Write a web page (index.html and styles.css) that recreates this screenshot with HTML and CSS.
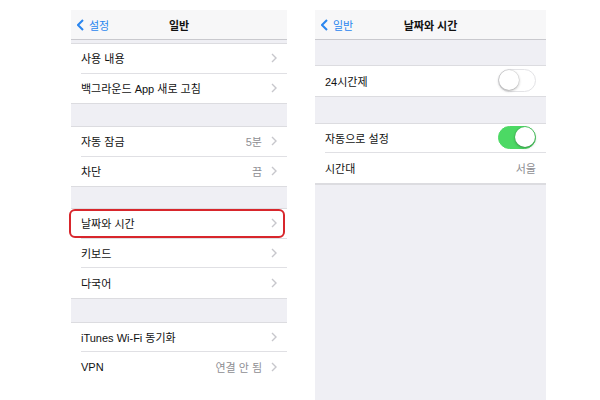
FILE: index.html
```html
<!DOCTYPE html>
<html lang="ko">
<head>
<meta charset="utf-8">
<link rel="stylesheet" href="styles.css">
</head>
<body>
<div class="page">
  <section class="phone phone-left">
    <header class="nav">
      <a class="back"><svg class="back-icon" viewBox="0 0 7 12"><path d="M6 1 1 6l5 5"/></svg>설정</a>
      <h1 class="title">일반</h1>
    </header>
    <div class="gap gap-top"></div>
    <ul class="group">
      <li class="row"><span class="label">사용 내용</span><span class="chev"><svg viewBox="0 0 6 10"><path d="M1 1l4 4-4 4"/></svg></span></li>
      <li class="row"><span class="label">백그라운드 App 새로 고침</span><span class="chev"><svg viewBox="0 0 6 10"><path d="M1 1l4 4-4 4"/></svg></span></li>
    </ul>
    <div class="gap gap-a"></div>
    <ul class="group">
      <li class="row"><span class="label">자동 잠금</span><span class="value">5분</span><span class="chev"><svg viewBox="0 0 6 10"><path d="M1 1l4 4-4 4"/></svg></span></li>
      <li class="row"><span class="label">차단</span><span class="value">끔</span><span class="chev"><svg viewBox="0 0 6 10"><path d="M1 1l4 4-4 4"/></svg></span></li>
    </ul>
    <div class="gap gap-b"></div>
    <ul class="group">
      <li class="row highlighted"><span class="label">날짜와 시간</span><span class="chev"><svg viewBox="0 0 6 10"><path d="M1 1l4 4-4 4"/></svg></span></li>
      <li class="row"><span class="label">키보드</span><span class="chev"><svg viewBox="0 0 6 10"><path d="M1 1l4 4-4 4"/></svg></span></li>
      <li class="row"><span class="label">다국어</span><span class="chev"><svg viewBox="0 0 6 10"><path d="M1 1l4 4-4 4"/></svg></span></li>
    </ul>
    <div class="gap gap-c"></div>
    <ul class="group group-last">
      <li class="row"><span class="label">iTunes Wi-Fi 동기화</span><span class="chev"><svg viewBox="0 0 6 10"><path d="M1 1l4 4-4 4"/></svg></span></li>
      <li class="row"><span class="label">VPN</span><span class="value">연결 안 됨</span><span class="chev"><svg viewBox="0 0 6 10"><path d="M1 1l4 4-4 4"/></svg></span></li>
    </ul>
  </section>

  <section class="phone phone-right">
    <header class="nav">
      <a class="back"><svg class="back-icon" viewBox="0 0 7 12"><path d="M6 1 1 6l5 5"/></svg>일반</a>
      <h1 class="title">날짜와 시간</h1>
    </header>
    <div class="gap gap-d"></div>
    <ul class="group">
      <li class="row"><span class="label">24시간제</span><span class="switch"></span></li>
    </ul>
    <div class="gap gap-e"></div>
    <ul class="group">
      <li class="row"><span class="label">자동으로 설정</span><span class="switch on"></span></li>
      <li class="row"><span class="label">시간대</span><span class="value value-plain">서울</span></li>
    </ul>
    <div class="fill"></div>
  </section>
</div>
</body>
</html>
```

FILE: styles.css
```css
* { box-sizing: border-box; }
html, body { margin: 0; padding: 0; background: #fff; }
body {
  width: 600px;
  height: 400px;
  overflow: hidden;
  font-family: "Liberation Sans", "Noto Sans CJK KR", sans-serif;
  font-size: 11px;
  color: #111;
}
.page {
  display: flex;
  gap: 28px;
  padding: 10px 0 0 71px;
  height: 400px;
}
.phone {
  display: flex;
  flex-direction: column;
  height: 390px;
}
.phone-left { width: 216px; }
.phone-right { width: 231px; background: #efeff4; }

.nav {
  height: 30px;
  flex: none;
  display: grid;
  grid-template-columns: 1fr auto 1fr;
  align-items: center;
  background: #f7f7f8;
  border-bottom: 1px solid #c9c9ce;
}
.back {
  display: flex;
  align-items: center;
  gap: 5px;
  padding-left: 6px;
  color: #2a86ef;
  font-size: 11px;
}
.back-icon {
  width: 7px;
  height: 12px;
  fill: none;
  stroke: #2a86ef;
  stroke-width: 2;
}
.title {
  margin: 0;
  font-size: 11px;
  font-weight: 700;
  color: #111;
}

.gap { background: #efeff4; flex: none; }
.gap-top { height: 3px; }
.gap-a { height: 22px; }
.gap-b { height: 21px; }
.gap-c { height: 23px; }
.gap-d { height: 25px; }
.gap-e { height: 26px; }

.group {
  list-style: none;
  margin: 0;
  padding: 0;
  background: #fff;
  border-top: 1px solid #dcdce0;
  border-bottom: 1px solid #dcdce0;
}
.group-last { border-bottom: none; }
.row {
  position: relative;
  height: 29.5px;
  display: flex;
  align-items: center;
  margin-left: 10px;
  padding-right: 10px;
  border-bottom: 1px solid #e0e0e4;
}
.row:last-child { border-bottom: none; }
.label { flex: 1; }
.value {
  color: #8e8e93;
  margin-right: 9px;
}
.value-plain { margin-right: 0; }
.chev { display: flex; }
.chev svg {
  width: 6px;
  height: 10px;
  fill: none;
  stroke: #c7c7cc;
  stroke-width: 1.4;
}
.highlighted::after {
  content: "";
  position: absolute;
  top: 0;
  bottom: 0;
  left: -12px;
  right: 2px;
  border: 2px solid #d8262c;
  border-radius: 6px;
}

.switch {
  position: relative;
  width: 38px;
  height: 23px;
  border-radius: 12px;
  border: 1.5px solid #e3e3e6;
  background: #fff;
}
.switch::after {
  content: "";
  position: absolute;
  top: 0;
  left: 0;
  width: 20px;
  height: 20px;
  border-radius: 50%;
  background: #fff;
  box-shadow: 0 1px 3px rgba(0,0,0,0.3), 0 0 0 0.5px rgba(0,0,0,0.1);
}
.switch.on {
  background: #4cd964;
  border-color: #4cd964;
}
.switch.on::after { left: auto; right: 0; }

.fill {
  flex: 1;
  background: #efeff4;
  border-top: 1px solid #dcdce0;
}
```
